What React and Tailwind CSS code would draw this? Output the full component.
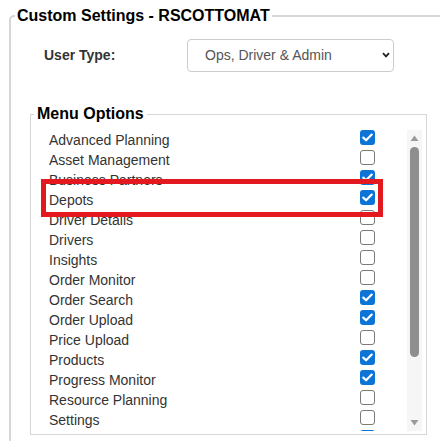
import { useState } from 'react';

const menuItems = [
    { name: 'Advanced Planning', on: true },
    { name: 'Asset Management', on: false },
    { name: 'Business Partners', on: true },
    { name: 'Depots', on: true },
    { name: 'Driver Details', on: false },
    { name: 'Drivers', on: false },
    { name: 'Insights', on: false },
    { name: 'Order Monitor', on: false },
    { name: 'Order Search', on: true },
    { name: 'Order Upload', on: true },
    { name: 'Price Upload', on: false },
    { name: 'Products', on: true },
    { name: 'Progress Monitor', on: true },
    { name: 'Resource Planning', on: false },
    { name: 'Settings', on: false },
    { name: 'Tanks', on: true },
];

function Check({ on, onClick }) {
    return (
        <span
            onClick={onClick}
            className={`w-[15px] h-[15px] rounded-[3px] shrink-0 flex items-center justify-center ${on ? 'bg-[#0b74d6]' : 'border-[1.5px] border-[#7a7a7a] bg-white'}`}
        >
            {on && (
                <svg width="11" height="9" viewBox="0 0 11 9">
                    <path d="M1.3 4.6 L4.1 7.3 L9.7 1.6" fill="none" stroke="#fff" strokeWidth="2.2" strokeLinecap="round" strokeLinejoin="round" />
                </svg>
            )}
        </span>
    );
}

export default function App() {
    const [items, setItems] = useState(menuItems);

    const toggle = (idx) => {
        setItems(items.map((it, i) => (i === idx ? { ...it, on: !it.on } : it)));
    };

    return (
        <div className="relative w-[440px] h-[441px] overflow-hidden bg-white font-[family-name:'Liberation_Sans',Arial,sans-serif]">
            <fieldset className="ml-[9px] mt-[7px] w-[470px] min-w-0 border-2 border-[#d6d6d6] rounded-tl-[5px] pl-[4px] pb-6">
                <legend className="px-[2px] text-[16px] leading-[18px] font-bold text-black">
                    Custom Settings - RSCOTTOMAT
                </legend>

                <div className="ml-[29px] mt-[14px] flex items-center">
                    <label className="w-[143px] text-[14px] font-bold text-[#333]">User Type:</label>
                    <div className="relative w-[207px] h-[33px]">
                        <select className="appearance-none w-full h-full border border-[#cccccc] rounded-[4px] bg-white pl-[17px] text-[14px] text-[#555] outline-none">
                            <option>Ops, Driver &amp; Admin</option>
                            <option>Ops</option>
                            <option>Driver</option>
                            <option>Admin</option>
                        </select>
                        <svg className="absolute right-[4px] top-[13px] pointer-events-none" width="8" height="6" viewBox="0 0 8 6">
                            <path d="M1 1.2 L4 4.4 L7 1.2" fill="none" stroke="#222" strokeWidth="1.8" />
                        </svg>
                    </div>
                </div>

                <fieldset className="ml-[15px] mt-[33px] w-[397px] min-w-0 border border-[#d6d6d6] pl-[3px] pr-[4px] pb-[3px]">
                    <legend className="px-[3px] text-[16px] leading-[18px] font-bold text-black">Menu Options</legend>

                    <div className="relative mt-[7px] h-[301px] flex">
                        <div className="flex-1 overflow-hidden">
                            {items.map((it, i) => (
                                <div key={it.name} className="h-[20px] flex items-start pl-[15px] pr-[32px]">
                                    <span className="flex-1 text-[14px] leading-[20px] text-[#333]">{it.name}</span>
                                    <Check on={it.on} onClick={() => toggle(i)} />
                                </div>
                            ))}
                        </div>

                        <div className="w-[15px] bg-[#f6f6f6] flex flex-col items-center">
                            <svg className="mt-[5px]" width="9" height="6" viewBox="0 0 9 6">
                                <path d="M0.5 6 L4.5 0.5 L8.5 6 Z" fill="#9a9a9a" />
                            </svg>
                            <div className="mt-[6px] w-[9px] h-[210px] rounded-full bg-[#8e8e8e]" />
                            <div className="flex-1" />
                            <svg className="mb-[5px]" width="9" height="6" viewBox="0 0 9 6">
                                <path d="M0.5 0 L4.5 5.5 L8.5 0 Z" fill="#9a9a9a" />
                            </svg>
                        </div>

                        <div className="absolute left-[7px] top-[49px] w-[342px] h-[38px] border-[5px] border-[#e3191f] pointer-events-none" />
                    </div>
                </fieldset>
            </fieldset>
        </div>
    );
}
